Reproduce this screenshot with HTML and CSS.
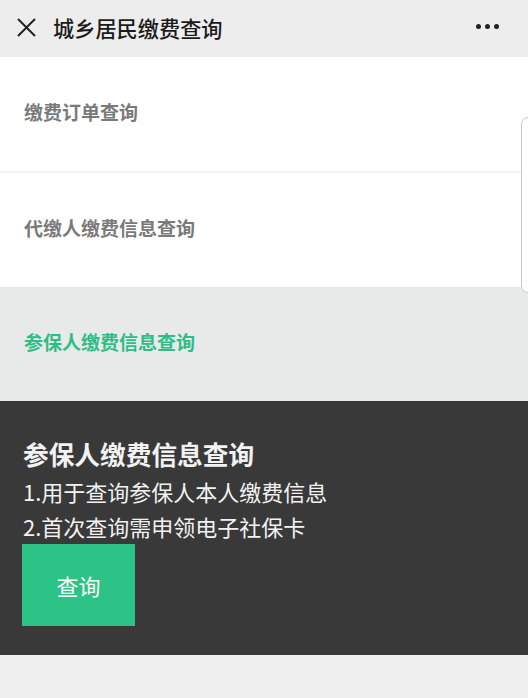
FILE: index.html
```html
<!DOCTYPE html>
<html lang="zh-CN">
<head>
<meta charset="utf-8">
<link rel="stylesheet" href="styles.css">
</head>
<body>
<header class="topbar">
  <svg class="close" width="19" height="19" viewBox="0 0 19 19"><path d="M1 1L18 18M18 1L1 18" stroke="#222" stroke-width="2" fill="none"/></svg>
  <div class="title">城乡居民缴费查询</div>
  <div class="more"><span></span><span></span><span></span></div>
</header>
<main class="list">
  <div class="row">缴费订单查询</div>
  <div class="row">代缴人缴费信息查询</div>
  <div class="row active">参保人缴费信息查询</div>
</main>
<section class="panel">
  <h2 class="panel-title">参保人缴费信息查询</h2>
  <p class="line">1.用于查询参保人本人缴费信息</p>
  <p class="line">2.首次查询需申领电子社保卡</p>
  <div class="btn">查询</div>
</section>
<div class="edge"></div>
</body>
</html>
```
FILE: styles.css
```css
* { box-sizing: border-box; }
html, body { margin: 0; padding: 0; }
body {
  background: #f0f0f0;
  font-family: "Noto Sans CJK SC", "Noto Sans", sans-serif;
  width: 528px;
  height: 698px;
  overflow: hidden;
  position: relative;
}
.topbar {
  height: 57px;
  background: #ededed;
  display: flex;
  align-items: center;
  padding: 0 0 0 17px;
}
.close { display: block; margin-top: -2px; }
.title {
  margin-left: 17px;
  font-size: 21.2px;
  font-weight: 500;
  color: #1b1b1b;
  margin-top: -2px;
}
.more {
  margin-left: auto;
  margin-right: 29px;
  display: flex;
  gap: 4px;
  margin-top: -4px;
}
.more span {
  width: 5px; height: 5px; border-radius: 50%;
  background: #222;
}
.list { background: #f2f2f2; }
.row {
  height: 114px;
  background: #fff;
  display: flex;
  align-items: center;
  padding-left: 24px;
  padding-bottom: 6px;
  font-size: 19px;
  font-weight: 700;
  color: #7a7a7a;
}
.row + .row { margin-top: 2px; }
.row.active {
  margin-top: 0;
  background: #e7eae9;
  color: #2dbe85;
  height: 114px;
  padding-bottom: 5px;
}
.panel {
  background: #393939;
  height: 254px;
  padding: 32px 0 0 23px;
  color: #f2f2f2;
}
.panel-title {
  margin: 0;
  font-size: 25.7px;
  font-weight: 700;
  line-height: 41px;
}
.line {
  margin: 0;
  font-size: 22px;
  line-height: 35px;
  font-weight: 400;
}
.btn {
  width: 113px;
  height: 82px;
  background: #2ec386;
  color: #fff;
  font-size: 22px;
  display: flex;
  align-items: center;
  justify-content: center;
  margin-left: -1px;
}
.edge {
  position: absolute;
  left: 521px;
  top: 117px;
  width: 20px;
  height: 176px;
  background: #fff;
  border: 1px solid #c8c8c8;
  border-radius: 7px;
}
```
